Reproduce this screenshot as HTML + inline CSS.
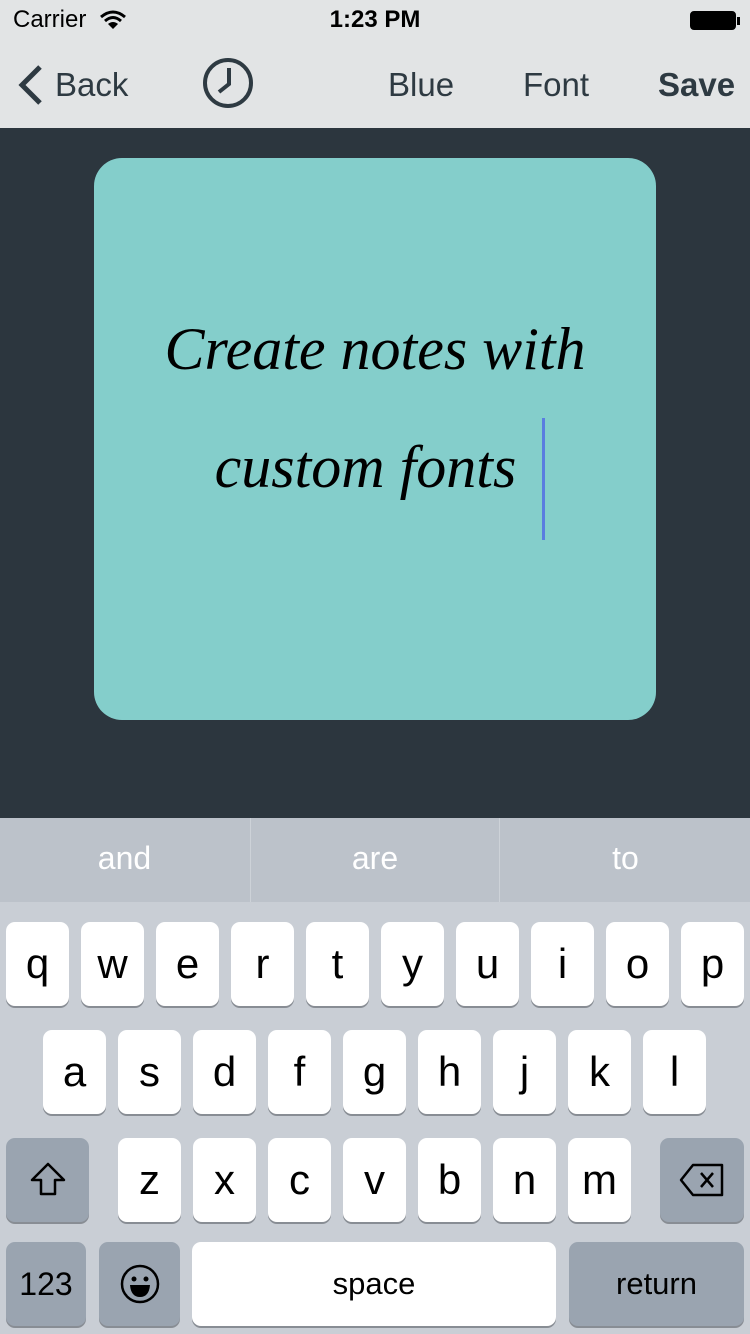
<!DOCTYPE html>
<html><head><meta charset="utf-8"><style>
*{margin:0;padding:0;box-sizing:border-box}
body{width:750px;height:1334px;position:relative;overflow:hidden;background:#2c363e;font-family:"Liberation Sans",sans-serif}
.a{position:absolute}
.top{left:0;top:0;width:750px;height:128px;background:#e2e4e5}
.nav{font-size:33px;color:#2e3a42;top:66px}
.sug{left:0;top:818px;width:750px;height:84px;background:#bcc2ca}
.sug div{position:absolute;top:0;height:84px;line-height:80px;color:#fff;font-size:32px;text-align:center}
.kb{left:0;top:902px;width:750px;height:432px;background:#c9ced5}
.k{position:absolute;width:63px;height:84px;background:#fff;border-radius:9px;box-shadow:0 2px 0 #888d94;text-align:center;font-size:42px;line-height:84px;color:#000}
.g{background:#9aa4b0}
</style></head><body>
<div class="a top"></div>
<div class="a" style="left:13px;top:6px;font-size:24px;color:#000">Carrier</div>
<svg class="a" style="left:100px;top:10px" width="26" height="20" viewBox="0 0 26 20"><path d="M1 7 Q13 -3 25 7" stroke="#000" stroke-width="3" fill="none"/><path d="M5 11 Q13 4 21 11" stroke="#000" stroke-width="3" fill="none"/><path d="M13 19 L8 14 Q13 10 18 14Z" fill="#000"/></svg>
<div class="a" style="left:0;width:750px;text-align:center;top:6px;font-size:24px;font-weight:bold;color:#000">1:23 PM</div>
<div class="a" style="left:690px;top:11px;width:46px;height:19px;border:2px solid #000;border-radius:4px;background:#000"></div>
<div class="a" style="left:737px;top:17px;width:3px;height:8px;background:#000"></div>
<svg class="a" style="left:16px;top:64px" width="28" height="42"><path d="M24 3 L6 21 L24 39" stroke="#2e3a42" stroke-width="5" fill="none"/></svg>
<div class="a nav" style="left:55px">Back</div>
<svg class="a" style="left:200px;top:56px" width="56" height="54"><circle cx="28" cy="27" r="23" stroke="#2e3a42" stroke-width="4" fill="none"/><path d="M29 12 V28 L19 36" stroke="#2e3a42" stroke-width="4" fill="none"/></svg>
<div class="a nav" style="left:388px">Blue</div>
<div class="a nav" style="left:523px">Font</div>
<div class="a nav" style="left:658px;font-weight:bold">Save</div>
<div class="a" style="left:94px;top:158px;width:562px;height:562px;border-radius:28px;background:#84cecb"></div>
<div class="a" style="left:94px;top:290px;width:562px;text-align:center;font-family:'Liberation Serif',serif;font-style:italic;font-size:60px;line-height:118px;color:#000">Create notes with<br><span style="position:relative;left:-2px">custom fonts&nbsp;</span></div>
<div class="a" style="left:542px;top:418px;width:3px;height:122px;background:#5a7de0"></div>
<div class="a sug"><div style="left:0;width:249px">and</div><div style="left:250px;width:250px;border-left:1px solid #cdd2d8;border-right:1px solid #cdd2d8">are</div><div style="left:501px;width:249px">to</div></div>
<div class="a kb"></div>
<div class="k" style="left:6px;top:922px">q</div><div class="k" style="left:81px;top:922px">w</div><div class="k" style="left:156px;top:922px">e</div><div class="k" style="left:231px;top:922px">r</div><div class="k" style="left:306px;top:922px">t</div><div class="k" style="left:381px;top:922px">y</div><div class="k" style="left:456px;top:922px">u</div><div class="k" style="left:531px;top:922px">i</div><div class="k" style="left:606px;top:922px">o</div><div class="k" style="left:681px;top:922px">p</div>
<div class="k" style="left:43px;top:1030px">a</div><div class="k" style="left:118px;top:1030px">s</div><div class="k" style="left:193px;top:1030px">d</div><div class="k" style="left:268px;top:1030px">f</div><div class="k" style="left:343px;top:1030px">g</div><div class="k" style="left:418px;top:1030px">h</div><div class="k" style="left:493px;top:1030px">j</div><div class="k" style="left:568px;top:1030px">k</div><div class="k" style="left:643px;top:1030px">l</div>
<div class="k g" style="left:6px;top:1138px;width:83px"><svg width="40" height="40" style="margin-top:22px" viewBox="0 0 40 40"><path d="M20 4 L36 20 H27 V34 H13 V20 H4Z" stroke="#000" stroke-width="2.5" fill="none" stroke-linejoin="round"/></svg></div>
<div class="k" style="left:118px;top:1138px">z</div><div class="k" style="left:193px;top:1138px">x</div><div class="k" style="left:268px;top:1138px">c</div><div class="k" style="left:343px;top:1138px">v</div><div class="k" style="left:418px;top:1138px">b</div><div class="k" style="left:493px;top:1138px">n</div><div class="k" style="left:568px;top:1138px">m</div>
<div class="k g" style="left:660px;top:1138px;width:84px"><svg width="48" height="36" style="margin-top:24px" viewBox="0 0 48 36"><path d="M15 3 H44 V33 H15 L3 18Z" stroke="#000" stroke-width="2.5" fill="none" stroke-linejoin="round"/><path d="M23 11 L35 25 M35 11 L23 25" stroke="#000" stroke-width="2.5"/></svg></div>
<div class="k g" style="left:6px;top:1242px;width:80px;font-size:32px">123</div>
<div class="k g" style="left:99px;top:1242px;width:81px"><svg width="42" height="42" style="margin-top:21px" viewBox="0 0 42 42"><circle cx="21" cy="21" r="18" stroke="#000" stroke-width="2.5" fill="none"/><circle cx="15" cy="16" r="2.5"/><circle cx="27" cy="16" r="2.5"/><path d="M11 22 H31 Q30 34 21 34 Q12 34 11 22Z"/></svg></div>
<div class="k" style="left:192px;top:1242px;width:364px;font-size:31px">space</div>
<div class="k g" style="left:569px;top:1242px;width:175px;font-size:31px">return</div>
</body></html>
